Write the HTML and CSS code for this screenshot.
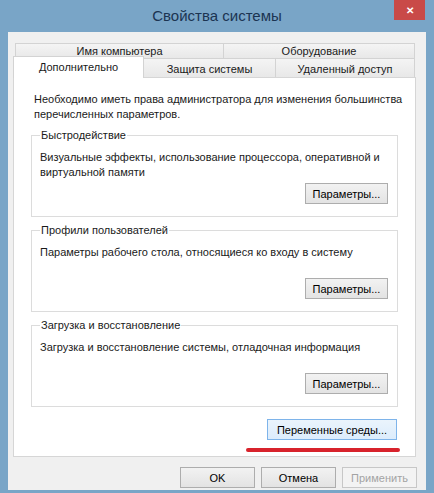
FILE: index.html
```html
<!DOCTYPE html>
<html lang="ru">
<head>
    <meta charset="UTF-8">
    <title>Свойства системы</title>
    <link rel="stylesheet" href="styles.css">
</head>
<body>
    <div class="window">
        <div class="titlebar">
            <span class="title">Свойства системы</span>
            <span class="close">&#x2715;</span>
        </div>
        <div class="client">
            <div class="tabs-back">
                <div class="tab back">Имя компьютера</div>
                <div class="tab back">Оборудование</div>
            </div>
            <div class="tabs-front">
                <div class="tab front selected">Дополнительно</div>
                <div class="tab front">Защита системы</div>
                <div class="tab front">Удаленный доступ</div>
            </div>
            <div class="panel">
                <p class="intro">Необходимо иметь права администратора для изменения большинства перечисленных параметров.</p>

                <fieldset class="group">
                    <legend>Быстродействие</legend>
                    <p class="desc">Визуальные эффекты, использование процессора, оперативной и виртуальной памяти</p>
                    <div class="row"><button class="btn">Параметры...</button></div>
                </fieldset>

                <fieldset class="group">
                    <legend>Профили пользователей</legend>
                    <p class="desc">Параметры рабочего стола, относящиеся ко входу в систему</p>
                    <div class="row"><button class="btn">Параметры...</button></div>
                </fieldset>

                <fieldset class="group">
                    <legend>Загрузка и восстановление</legend>
                    <p class="desc">Загрузка и восстановление системы, отладочная информация</p>
                    <div class="row"><button class="btn">Параметры...</button></div>
                </fieldset>

                <div class="row env-row"><button class="btn env">Переменные среды...</button></div>
                <div class="row"><span class="mark"></span></div>
            </div>
            <div class="row footer">
                <button class="btn dlg">OK</button>
                <button class="btn dlg">Отмена</button>
                <button class="btn dlg" disabled>Применить</button>
            </div>
        </div>
    </div>
</body>
</html>
```

FILE: styles.css
```css
* {
    box-sizing: border-box;
}
body {
    margin: 0;
    padding: 0;
    font-family: "Liberation Sans", Arial, sans-serif;
    font-size: 11px;
    color: #1a1a1a;
    background-color: #fff;
}
.window {
    width: 434px;
    height: 493px;
    background-color: #79a5c7;
    padding: 0 8px 3px 8px;
    display: flex;
    flex-direction: column;
}
.titlebar {
    height: 32px;
    position: relative;
    display: flex;
    align-items: center;
    justify-content: center;
}
.title {
    font-size: 15px;
    color: #1b3452;
    padding-bottom: 1px;
}
.close {
    position: absolute; /* caption button sits over the title bar */
    top: 0;
    right: 1px;
    width: 31px;
    height: 20px;
    background-color: #c94a48;
    color: #fff;
    font-size: 10px;
    font-weight: bold;
    display: flex;
    align-items: center;
    justify-content: center;
}
.client {
    flex: 1;
    background-color: #f0f0f0;
    padding: 11px 10px 0 5px;
}

/* tabs */
.tabs-back {
    display: grid;
    grid-template-columns: 209px 1fr;
    margin: 0 1px 0 2px;
}
.tab {
    border: 1px solid #d3d3d3;
    border-bottom: none;
    background: linear-gradient(#f4f4f4, #e8e8e8);
    display: flex;
    justify-content: center;
    align-items: center;
    white-space: nowrap;
}
.tab.back {
    height: 15px;
}
.tab.back + .tab.back {
    margin-left: -1px;
}
.tabs-front {
    display: flex;
    align-items: flex-start;
    margin-right: 1px;
}
.tab.front {
    height: 19px;
    padding-top: 2px;
}
.tab.front + .tab.front {
    margin-left: -1px;
}
.tab.selected {
    width: 131px;
    height: 22px;
    margin-top: -2px;
    margin-bottom: -1px;
    background: #fff;
    position: relative;
    z-index: 1;
    padding-top: 0;
    padding-bottom: 1px;
}
.tab.front:nth-child(2) {
    width: 133px;
}
.tab.front:nth-child(3) {
    flex: 1;
}

/* page */
.panel {
    background-color: #fff;
    border: 1px solid #d6d6d6;
    padding: 14px 17px 4px 17px;
}
.intro {
    margin: 0 -10px 6px 0;
    padding-left: 3px;
    line-height: 15px;
}
.group {
    margin: 0 0 6px 0;
    border: 1px solid #dcdcdc;
    padding: 7px 9px 12px 8px;
}
.group legend {
    padding: 0 1px;
    line-height: 15px;
}
.desc {
    margin: 0 0 3px 0;
    min-height: 30px;
    line-height: 15px;
}
.row {
    display: flex;
    justify-content: flex-end;
}
.btn {
    font-family: inherit;
    font-size: 11px;
    white-space: nowrap;
    color: #000;
    height: 21px;
    padding: 0;
    border: 1px solid #adadad;
    background: linear-gradient(#f2f2f2, #e3e3e3);
}
.group .btn {
    width: 83px;
}
.env-row {
    margin-top: 12px;
    padding-right: 1px;
}
.btn.env {
    width: 130px;
    border-color: #7eb4ea;
    background: linear-gradient(#eaf4fc, #dcecfc);
}
.mark {
    display: block;
    width: 154px;
    height: 4px;
    margin: 8px -2px 0 0;
    border-radius: 2px;
    background-color: #d8232c;
}
.footer {
    gap: 6px;
    margin-top: 10px;
    margin-right: -1px;
}
.btn.dlg {
    width: 75px;
}
.btn:disabled {
    color: #a3a3a3;
    border-color: #c7c7c7;
    background: #f3f3f3;
}
```
